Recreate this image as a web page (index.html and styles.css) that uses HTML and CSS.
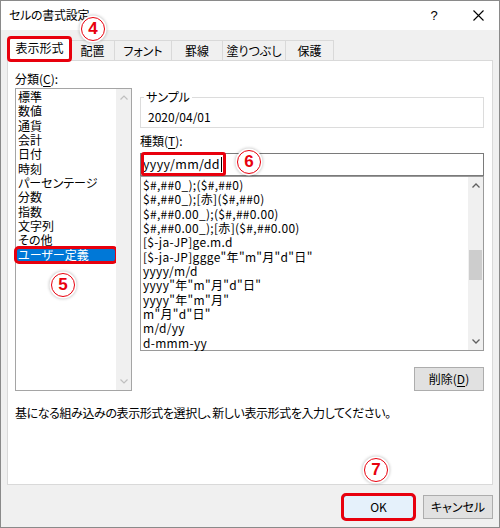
FILE: index.html
```html
<!DOCTYPE html>
<html lang="ja">
<head>
<meta charset="utf-8">
<title>セルの書式設定</title>
<link rel="stylesheet" href="styles.css">
</head>
<body>
<div class="window">
  <div class="titlebar">
    <span class="title">セルの書式設定</span>
    <span class="caption-btn help">?</span>
    <span class="caption-btn close">
      <svg width="11" height="11" viewBox="0 0 11 11"><path d="M0.5 0.5 L10.5 10.5 M10.5 0.5 L0.5 10.5" stroke="#000" stroke-width="1.1" fill="none"/></svg>
    </span>
  </div>

  <div class="tabs">
    <div class="tab active mark-tab">表示形式</div>
    <div class="tab tab-2">配置</div>
    <div class="tab tab-3">フォント</div>
    <div class="tab tab-4">罫線</div>
    <div class="tab tab-5">塗りつぶし</div>
    <div class="tab tab-6">保護</div>
  </div>

  <div class="panel">
    <div class="columns">
      <div class="left">
        <div class="label">分類(<u>C</u>):</div>
        <div class="listbox cat">
          <ul class="items">
            <li>標準</li>
            <li>数値</li>
            <li>通貨</li>
            <li>会計</li>
            <li>日付</li>
            <li>時刻</li>
            <li>パーセンテージ</li>
            <li>分数</li>
            <li>指数</li>
            <li>文字列</li>
            <li>その他</li>
            <li class="selected">ユーザー定義</li>
          </ul>
          <div class="scrollbar disabled">
            <div class="sb-btn"><svg width="8" height="5" viewBox="0 0 8 5"><polyline points="0.5,4.5 4,1 7.5,4.5" fill="none" stroke="currentColor" stroke-width="1.2"/></svg></div>
            <div class="sb-track"></div>
            <div class="sb-btn"><svg width="8" height="5" viewBox="0 0 8 5"><polyline points="0.5,0.5 4,4 7.5,0.5" fill="none" stroke="currentColor" stroke-width="1.2"/></svg></div>
          </div>
        </div>
      </div>

      <div class="right">
        <fieldset class="sample">
          <legend>サンプル</legend>
          <div class="sample-value">2020/04/01</div>
        </fieldset>
        <div class="label type-label">種類(<u>T</u>):</div>
        <div class="input">
          <span class="typed">yyyy/mm/dd<span class="caret"></span></span>
        </div>
        <div class="listbox fmt">
          <ul class="items">
            <li>$#,##0_);($#,##0)</li>
            <li>$#,##0_);[赤]($#,##0)</li>
            <li>$#,##0.00_);($#,##0.00)</li>
            <li>$#,##0.00_);[赤]($#,##0.00)</li>
            <li>[$-ja-JP]ge.m.d</li>
            <li>[$-ja-JP]ggge"年"m"月"d"日"</li>
            <li>yyyy/m/d</li>
            <li>yyyy"年"m"月"d"日"</li>
            <li>yyyy"年"m"月"</li>
            <li>m"月"d"日"</li>
            <li>m/d/yy</li>
            <li>d-mmm-yy</li>
          </ul>
          <div class="scrollbar">
            <div class="sb-btn"><svg width="8" height="5" viewBox="0 0 8 5"><polyline points="0.5,4.5 4,1 7.5,4.5" fill="none" stroke="currentColor" stroke-width="1.3"/></svg></div>
            <div class="sb-track"><div class="sb-thumb"></div></div>
            <div class="sb-btn"><svg width="8" height="5" viewBox="0 0 8 5"><polyline points="0.5,0.5 4,4 7.5,0.5" fill="none" stroke="currentColor" stroke-width="1.3"/></svg></div>
          </div>
        </div>
        <div class="btnrow">
          <button class="btn delete">削除(<u>D</u>)</button>
        </div>
      </div>
    </div>
    <p class="desc">基になる組み込みの表示形式を選択し、新しい表示形式を入力してください。</p>
  </div>

  <div class="footer">
    <button class="btn ok">OK</button>
    <button class="btn cancel">キャンセル</button>
  </div>

  <span class="step step-4">4</span>
  <span class="step step-5">5</span>
  <span class="step step-6">6</span>
  <span class="step step-7">7</span>
</div>
</body>
</html>
```

FILE: styles.css
```css
* { box-sizing: border-box; }
html, body { margin: 0; padding: 0; }
body {
  font-family: "Noto Sans CJK JP", "Noto Sans", sans-serif;
  font-size: 12px;
  color: #000;
  font-feature-settings: "palt";
  background: #fff;
}

.window {
  position: relative;
  width: 500px;
  height: 528px;
  border: 1px solid #8a8a8a;
  background: #f0f0f0;
  display: flex;
  flex-direction: column;
  overflow: hidden;
}

/* title bar */
.titlebar {
  height: 29px;
  flex: none;
  background: #fff;
  display: flex;
  align-items: center;
  padding-left: 8px;
}
.title { flex: 1; line-height: 16px; margin-top: -1px; letter-spacing: -0.3px; }
.caption-btn {
  width: 44px;
  height: 29px;
  display: flex;
  align-items: center;
  justify-content: center;
}
.help {
  font-family: "Liberation Sans", sans-serif;
  font-size: 13px;
  margin-top: -1px;
}
.close { margin-right: -1px; }

/* tabs */
.tabs {
  height: 30px;
  flex: none;
  display: flex;
  align-items: flex-end;
  padding-left: 7px;
}
.tab {
  height: 20px;
  border: 1px solid #d9d9d9;
  border-width: 1px 1px 0 0;
  background: #f0f0f0;
  display: flex;
  align-items: center;
  justify-content: center;
  line-height: 16px;
}
.tab.active {
  width: 63px;
  height: 24px;
  margin-bottom: -1px;
  border-width: 1px 1px 0 1px;
  background: #fff;
  position: relative;
  z-index: 1;
  padding-bottom: 3px;
}
.mark-tab {
  outline: 3px solid #e8000d;
  outline-offset: -2px;
  border-radius: 3px;
}
.tab-2 { width: 44px; }
.tab-3 { width: 57px; }
.tab-4 { width: 51px; }
.tab-5 { width: 63px; }
.tab-6 { width: 48px; }

/* panel */
.panel {
  height: 425px;
  flex: none;
  margin: 0 6px;
  background: #fff;
  border: 1px solid #d9d9d9;
  padding: 9px 7px 0 7px;
}
.columns {
  display: grid;
  grid-template-columns: 117px 344px;
  column-gap: 8px;
}
.label { line-height: 18px; }
.label u, .btn u { text-decoration-thickness: 1px; text-underline-offset: 2px; }

.listbox {
  display: flex;
  border: 1px solid #a5a5a5;
  background: #fff;
}
.listbox.cat { height: 303px; }
.listbox.fmt { height: 175px; border-color: #9a9a9a; }

.items {
  list-style: none;
  margin: 0;
  padding: 1px 0 0 0;
  flex: 1;
  min-width: 0;
}
.items li {
  line-height: 14.33px;
  height: 14.33px;
  padding-left: 2px;
  white-space: nowrap;
}
.fmt .items li { letter-spacing: 0.3px; }
.items li.selected {
  background: #0078d7;
  color: #fff;
  outline: 3px solid #e8000d;
  outline-offset: -1.5px;
  border-radius: 3px;
}

.scrollbar {
  width: 15px;
  flex: none;
  background: #f0f0f0;
  display: flex;
  flex-direction: column;
  color: #606060;
}
.scrollbar.disabled { color: #bfbfbf; }
.sb-btn {
  height: 17px;
  display: flex;
  align-items: center;
  justify-content: center;
}
.sb-track { flex: 1; }
.sb-thumb {
  margin: 56px 1px 0 1px;
  height: 30px;
  background: #cdcdcd;
}

/* right column */
.right {
  margin-top: 19px;
  display: flex;
  flex-direction: column;
}
.sample {
  margin: 0;
  border: 1px solid #dcdcdc;
  padding: 4px 0 2px 3px;
  min-width: 0;
}
.sample legend {
  padding: 0 2px;
  line-height: 16px;
}
.sample-value { line-height: 16px; padding-left: 4px; }

.type-label { line-height: 16px; margin-top: 5px; }

.input {
  margin-top: 4px;
  height: 23px;
  border: 1px solid #7a7a7a;
  display: flex;
  align-items: flex-start;
}
.typed {
  display: inline-flex;
  align-items: center;
  height: 24px;
  margin-top: -2px;
  padding: 0 4px 0 2px;
  line-height: 24px;
  outline: 3px solid #e8000d;
  outline-offset: -3px;
  border-radius: 3px;
  font-size: 12.5px;
  letter-spacing: 0.3px;
}
.caret {
  display: inline-block;
  width: 1px;
  height: 15px;
  background: #000;
  margin-left: 1px;
}

.btnrow {
  display: flex;
  justify-content: flex-end;
  margin-top: 16px;
}

.btn {
  font-family: inherit;
  font-size: 12px;
  font-feature-settings: "palt";
  color: #000;
  height: 24px;
  padding: 0;
  background: #e1e1e1;
  border: 1px solid #adadad;
  border-radius: 0;
  line-height: 20px;
}
.delete { width: 70px; }

.desc {
  margin: 14px 0 0 0;
  line-height: 16px;
  white-space: nowrap;
  letter-spacing: -0.4px;
}

/* footer */
.footer {
  flex: 1;
  display: flex;
  justify-content: flex-end;
  align-items: flex-start;
  gap: 9px;
  padding: 10px 6px 0 0;
}
.ok {
  width: 71px;
  background: #e5f1fb;
  border-color: #0078d7;
  outline: 3px solid #e8000d;
  outline-offset: -1px;
  border-radius: 3px;
}
.cancel { width: 70px; }

/* annotation circles */
.step {
  position: absolute;
  width: 24px;
  height: 24px;
  border-radius: 50%;
  background: #fff;
  border: 1.5px solid #e8000d;
  box-shadow: 0 0 0 1.5px #fff, 0 0 3px 2px rgba(0, 0, 0, 0.22);
  color: #e8000d;
  font-family: "Liberation Sans", sans-serif;
  font-weight: bold;
  font-size: 17px;
  line-height: 21px;
  text-align: center;
  z-index: 5;
}
.step-4 { left: 80px; top: 16px; }
.step-5 { left: 50px; top: 272px; }
.step-6 { left: 236px; top: 149px; }
.step-7 { left: 363px; top: 457px; }
```
